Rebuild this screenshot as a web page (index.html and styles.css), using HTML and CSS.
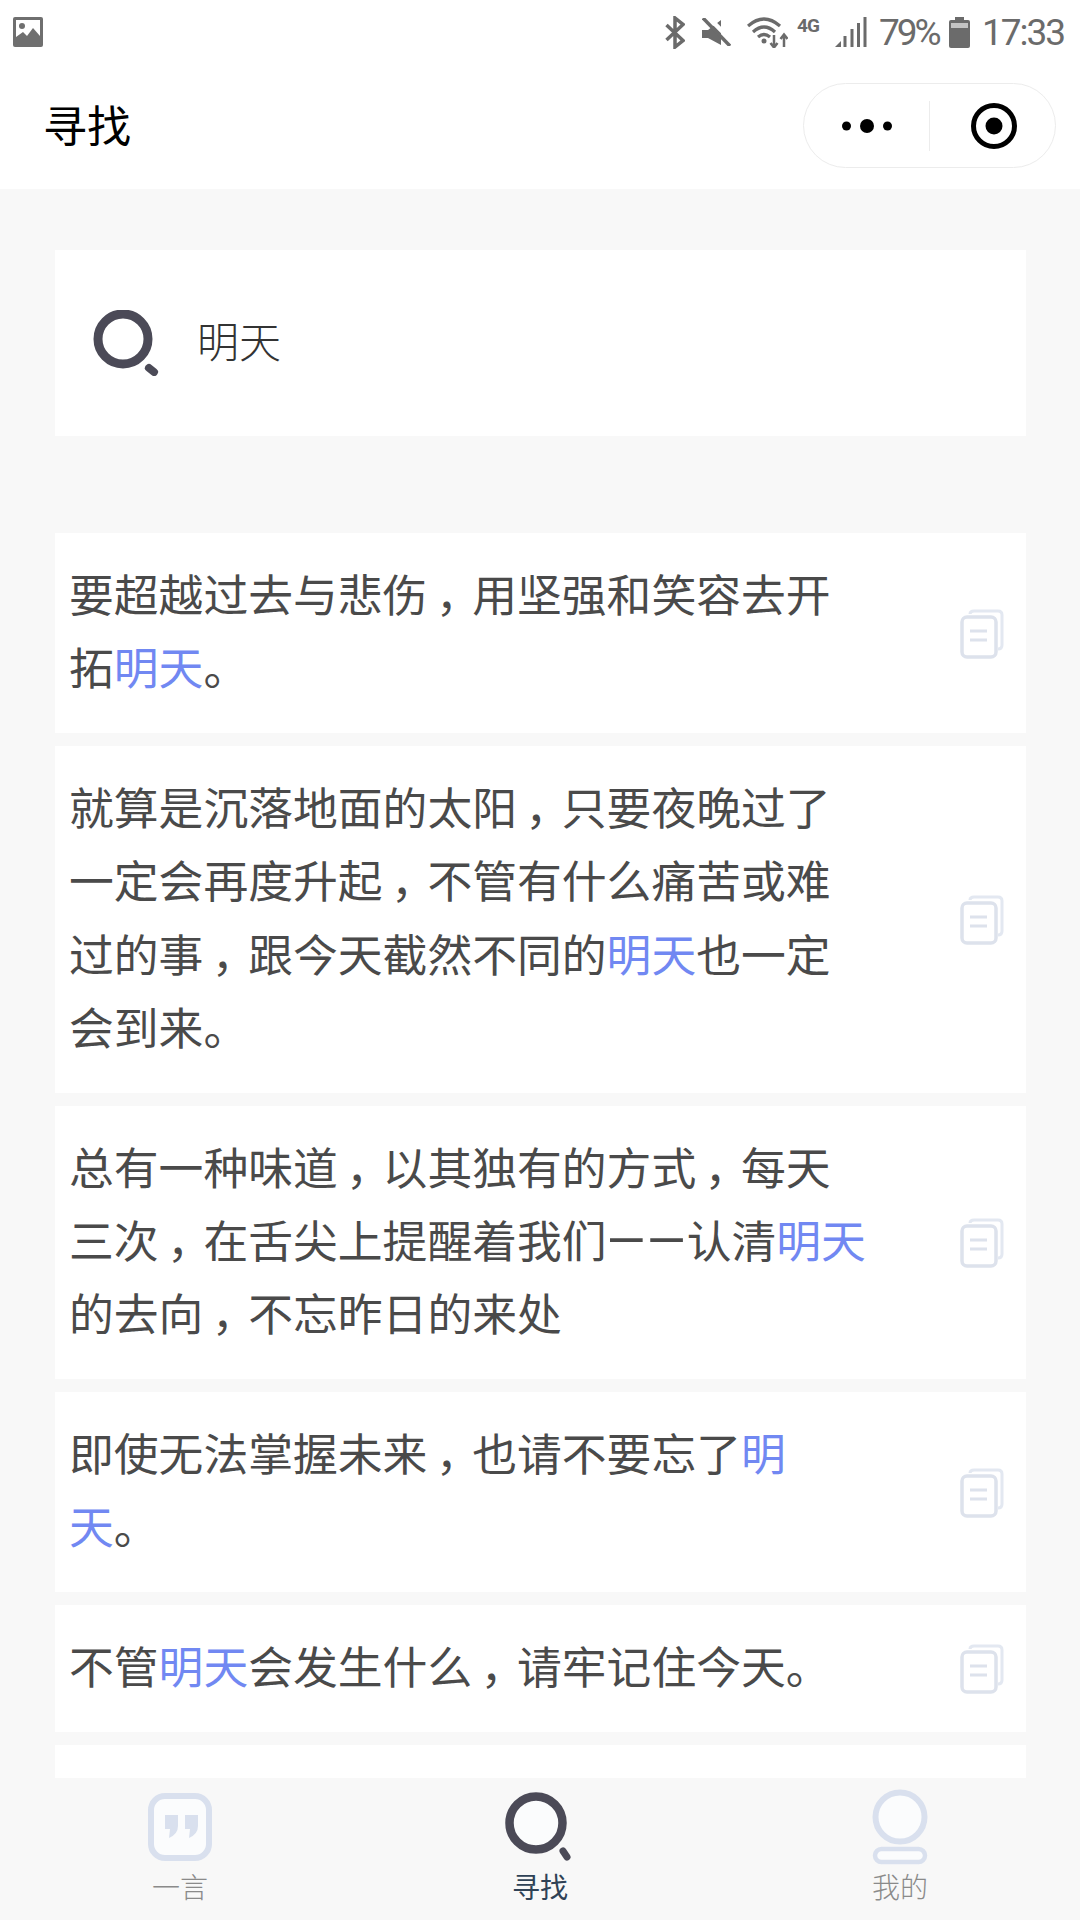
FILE: index.html
```html
<!DOCTYPE html>
<html lang="zh-CN">

<head>
  <meta charset="UTF-8">
  <meta name="viewport" content="width=device-width, initial-scale=1.0">
  <title>寻找</title>
  <link rel="stylesheet" href="styles.css">
</head>

<body>
  <svg class="defs">
    <symbol id="copy" viewBox="0 0 44 50">
      <path d="M10 5 Q10 2 14 2 H38 Q42 2 42 6 V36 Q42 40 38 40" fill="none" stroke="#e3e8f1" stroke-width="3" />
      <rect x="2" y="8" width="34" height="40" rx="5" fill="#fff" stroke="#dde2ec" stroke-width="3.500" />
      <path d="M10 22 H27 M10 31 H27" stroke="#dde2ec" stroke-width="3" />
    </symbol>
  </svg>

  <div class="status-bar">
    <svg class="pic-icon" viewBox="0 0 30 30">
      <rect x="0" y="0" width="30" height="30" rx="2" fill="#6f6f6f" />
      <rect x="3" y="3" width="24" height="24" fill="#fff" />
      <circle cx="9" cy="9" r="3" fill="#6f6f6f" />
      <path d="M3 27 V20 L10 15 L14 19 L20 11 L27 19 V27 Z" fill="#6f6f6f" />
    </svg>
    <div class="status-right">
      <svg class="st-bt" viewBox="0 0 20 33">
        <path d="M1.500 9 L18 24.500 L10 31 V2 L18 8.500 L1.500 24" fill="none" stroke="#6b6b6b" stroke-width="3.500" />
      </svg>
      <svg class="st-mute" viewBox="0 0 29 28">
        <path d="M0 12 H6 L19 2 V27 L6 20 H0 Z" fill="#6b6b6b" />
        <path d="M4 -3 L32 25" stroke="#fff" stroke-width="4.500" />
        <path d="M1 0 L28 28" stroke="#6b6b6b" stroke-width="3.500" />
      </svg>
      <svg class="st-wifi" viewBox="0 0 41 32">
        <path d="M1 10 Q17 -4 33 10 M6 16 Q17 6 28 16 M11 21 Q17 16 23 21" fill="none" stroke="#6b6b6b" stroke-width="3.200" />
        <circle cx="17" cy="25" r="2.500" fill="#6b6b6b" />
        <path d="M27 19 V31 M23.500 27 L27 31.500 L30.500 27 M37 31 V19 M33.500 23 L37 18.500 L40.500 23" fill="none" stroke="#6b6b6b" stroke-width="2.500" />
      </svg>
      <span class="st-4g">4G</span>
      <svg class="st-signal" viewBox="0 0 32 30">
        <path d="M0 30 L6 24 V30 Z" fill="#6b6b6b" />
        <path d="M10 30 V19 M17 30 V12 M23.500 30 V6 M30 30 V0" stroke="#6b6b6b" stroke-width="3" />
      </svg>
      <span class="st-text st-pct">79%</span>
      <svg class="st-batt" viewBox="0 0 21 31">
        <rect x="6" y="0" width="9" height="4" fill="#6b6b6b" />
        <rect x="0" y="3" width="21" height="28" rx="2" fill="#6b6b6b" />
        <rect x="2" y="6" width="17" height="5" fill="#c4c4c4" />
      </svg>
      <span class="st-text st-time">17:33</span>
    </div>
  </div>

  <div class="nav-bar">
    <div class="nav-title">寻找</div>
    <div class="capsule">
      <div class="capsule-half">
        <svg class="capsule-dots" viewBox="0 0 50 14">
          <circle cx="4.500" cy="7" r="4.500" />
          <circle cx="25" cy="7" r="7" />
          <circle cx="45.500" cy="7" r="4.500" />
        </svg>
      </div>
      <div class="capsule-line"></div>
      <div class="capsule-half">
        <svg class="capsule-target" viewBox="0 0 46 46">
          <circle cx="23" cy="23" r="20.500" fill="none" stroke="#000" stroke-width="5" />
          <circle cx="23" cy="23" r="8.500" />
        </svg>
      </div>
    </div>
  </div>

  <div class="content">
    <div class="search-box">
      <svg class="search-icon" viewBox="0 0 66 66">
        <circle cx="30" cy="29" r="25" fill="none" stroke="#4b4a57" stroke-width="9" />
        <path d="M56 58 L61 62" stroke="#4b4a57" stroke-width="8" stroke-linecap="round" />
      </svg>
      <span class="search-text">明天</span>
    </div>

    <div class="list">
      <div class="item">
        <div class="item-text">要超越过去与悲伤<span class="comma">，</span>用坚强和笑容去开<br>拓<span class="hl">明天</span>。</div>
        <svg class="copy-icon"><use href="#copy" /></svg>
      </div>
      <div class="item">
        <div class="item-text">就算是沉落地面的太阳<span class="comma">，</span>只要夜晚过了<br>一定会再度升起<span class="comma">，</span>不管有什么痛苦或难<br>过的事<span class="comma">，</span>跟今天截然不同的<span class="hl">明天</span>也一定<br>会到来。</div>
        <svg class="copy-icon"><use href="#copy" /></svg>
      </div>
      <div class="item">
        <div class="item-text">总有一种味道<span class="comma">，</span>以其独有的方式<span class="comma">，</span>每天<br>三次<span class="comma">，</span>在舌尖上提醒着我们<span class="dash">——</span>认清<span class="hl">明天</span><br>的去向<span class="comma">，</span>不忘昨日的来处</div>
        <svg class="copy-icon"><use href="#copy" /></svg>
      </div>
      <div class="item">
        <div class="item-text">即使无法掌握未来<span class="comma">，</span>也请不要忘了<span class="hl">明</span><br><span class="hl">天</span>。</div>
        <svg class="copy-icon"><use href="#copy" /></svg>
      </div>
      <div class="item">
        <div class="item-text">不管<span class="hl">明天</span>会发生什么<span class="comma">，</span>请牢记住今天。</div>
        <svg class="copy-icon"><use href="#copy" /></svg>
      </div>
      <div class="item item-cut"></div>
    </div>
  </div>

  <div class="tab-bar">
    <div class="tab">
      <svg class="tab-icon" viewBox="0 0 70 70">
        <rect x="6" y="4" width="58" height="62" rx="14" fill="#fbfcfd" stroke="#d9e0ee" stroke-width="6" />
        <path d="M20 23 H33 V34 Q33 42 24 46 L25 37 H20 Z M40 23 H53 V34 Q53 42 44 46 L45 37 H40 Z" fill="#d9e0ee" />
      </svg>
      <span class="tab-label">一言</span>
    </div>
    <div class="tab tab-on">
      <svg class="tab-icon" viewBox="0 0 70 70">
        <circle cx="31" cy="31" r="26.500" fill="#fbfcfd" stroke="#4b4a57" stroke-width="8.500" />
        <path d="M58 59 L62 65" stroke="#4b4a57" stroke-width="7" stroke-linecap="round" />
      </svg>
      <span class="tab-label">寻找</span>
    </div>
    <div class="tab">
      <svg class="tab-icon" viewBox="0 0 70 70">
        <circle cx="35" cy="25" r="24.500" fill="#fbfcfd" stroke="#d9e0ee" stroke-width="6" />
        <rect x="10" y="57" width="50" height="13" rx="6.500" fill="#fbfcfd" stroke="#d9e0ee" stroke-width="4.500" />
      </svg>
      <span class="tab-label">我的</span>
    </div>
  </div>
</body>

</html>
```
FILE: styles.css
```css
* {
  box-sizing: border-box;
}

html,
body {
  margin: 0;
  height: 1920px;
  overflow: hidden;
}

body {
  width: 1080px;
  display: flex;
  flex-direction: column;
  background: #f8f8f8;
  font-family: "Noto Sans CJK SC", "Noto Sans", sans-serif;
}

.defs {
  width: 0;
  height: 0;
  position: absolute;
}

.status-bar {
  height: 64px;
  flex: none;
  background: #fff;
  display: flex;
  align-items: center;
  justify-content: space-between;
  padding: 0 15px 0 13px;
}

.pic-icon {
  width: 30px;
  height: 30px;
}

.status-right {
  display: flex;
  align-items: center;
  color: #6b6b6b;
}

.st-bt {
  width: 20px;
  height: 33px;
}

.st-mute {
  width: 29px;
  height: 28px;
  margin-left: 17px;
  overflow: hidden;
}

.st-wifi {
  width: 41px;
  height: 32px;
  margin-left: 16px;
}

.st-4g {
  font: bold 19px "Roboto", sans-serif;
  margin: -14px 0 0 9px;
  width: 26px;
  letter-spacing: -1px;
}

.st-signal {
  width: 32px;
  height: 30px;
  margin-left: 12px;
}

.st-text {
  font: 37px "Roboto", sans-serif;
  white-space: nowrap;
}

.st-pct {
  width: 59px;
  margin-left: 12px;
  letter-spacing: -3px;
}

.st-batt {
  width: 21px;
  height: 31px;
  margin-left: 11px;
}

.st-time {
  width: 83px;
  margin-left: 12px;
  letter-spacing: -2px;
}

.nav-bar {
  height: 125px;
  flex: none;
  background: #fff;
  display: flex;
  align-items: center;
  justify-content: space-between;
  padding: 0 24px 0 43px;
}

.nav-title {
  font-size: 44px;
  color: #000;
  line-height: 1;
  margin-top: -6px;
}

.capsule {
  width: 253px;
  height: 85px;
  margin-top: -2px;
  border: 1px solid #ececec;
  border-radius: 43px;
  display: flex;
  align-items: center;
}

.capsule-half {
  flex: 1;
  display: flex;
  justify-content: center;
}

.capsule-line {
  width: 1px;
  height: 50px;
  background: #ececec;
}

.capsule-dots {
  width: 50px;
  height: 14px;
}

.capsule-target {
  width: 46px;
  height: 46px;
  margin-left: 2px;
}

.content {
  flex: 1;
  padding: 61px 54px 0 55px;
  overflow: hidden;
}

.search-box {
  height: 186px;
  background: #fff;
  display: flex;
  align-items: center;
  padding-left: 38px;
}

.search-icon {
  width: 66px;
  height: 66px;
}

.search-text {
  font-size: 42px;
  font-weight: 300;
  color: #333;
  margin: -8px 0 0 38px;
}

.list {
  margin-top: 97px;
  display: flex;
  flex-direction: column;
  gap: 13px;
}

.item {
  background: #fff;
  display: flex;
  align-items: center;
  justify-content: space-between;
  padding: 23px 22px 30.400px 14px;
}

.item-text {
  font-size: 44.800px;
  line-height: 73.300px;
  color: #4a4a4a;
}

.hl {
  color: #7188f2;
}

.comma {
  display: inline-block;
  width: 1em;
  text-align: center;
  font-feature-settings: "palt";
}

.dash {
  font-family: "Roboto", sans-serif;
  font-size: 50px;
  letter-spacing: 1px;
  line-height: 0;
}

.copy-icon {
  width: 44px;
  height: 50px;
  flex: none;
  margin-top: 9px;
}

.item-cut {
  height: 127px;
}

.tab-bar {
  position: absolute;
  left: 0;
  right: 0;
  top: 1778px;
  height: 142px;
  background: #f8f8f8;
  display: flex;
}

.tab {
  flex: 1;
  display: flex;
  flex-direction: column;
  align-items: center;
  padding-top: 14px;
}

.tab-icon {
  width: 70px;
  height: 70px;
  overflow: visible;
}

.tab-label {
  font-size: 28px;
  font-weight: 300;
  line-height: 36px;
  margin-top: 6px;
  color: #8a8a8a;
}

.tab-on .tab-label {
  color: #2f4256;
  font-weight: 400;
}
```
